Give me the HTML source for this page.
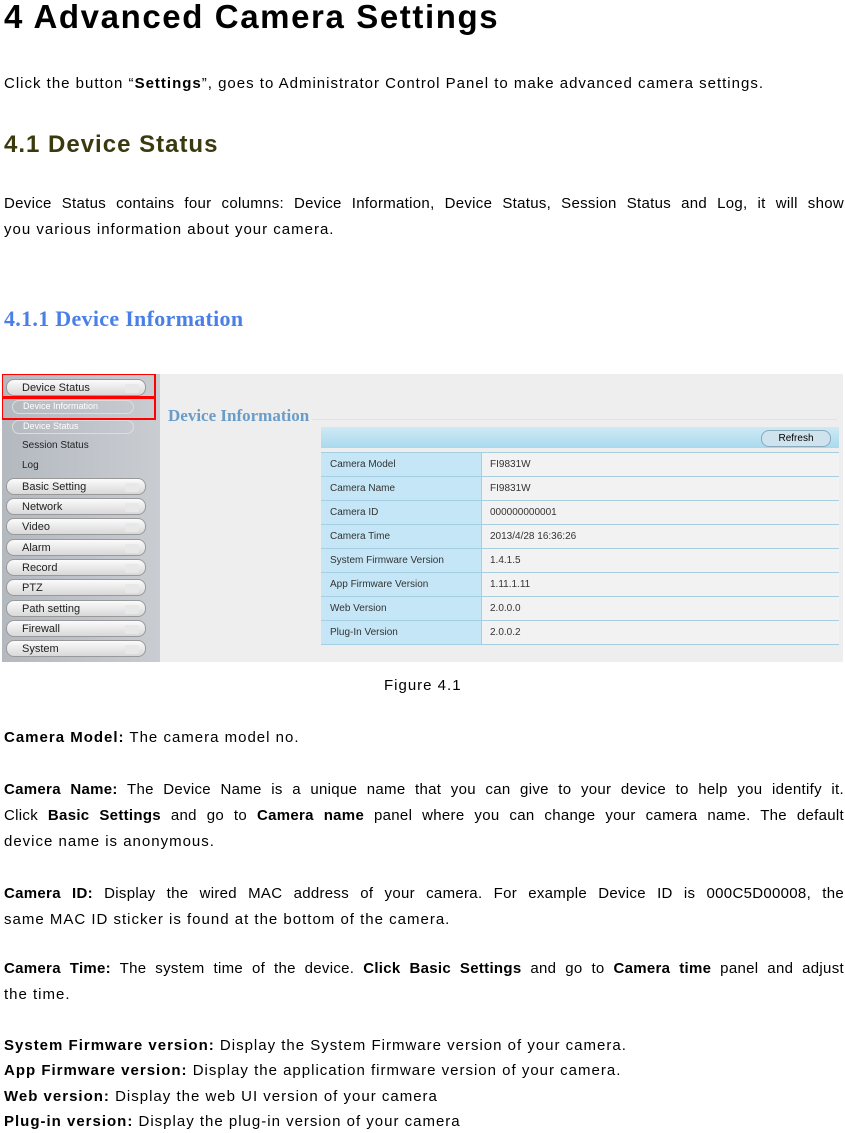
<!DOCTYPE html>
<html><head><meta charset="utf-8"><style>
body{margin:0;width:845px;height:1133px;background:#fff;position:relative;font-family:"Liberation Sans",sans-serif;color:#000;overflow:hidden}
.l{position:absolute;left:4px;font-size:15px;white-space:nowrap;line-height:18px;letter-spacing:1px}
.j{width:840px;text-align:justify;text-align-last:justify;letter-spacing:0.3px}
b{font-weight:bold}
#fig{position:absolute;left:2px;top:374px;width:841px;height:288px;background:#eeeeee;overflow:hidden}
#side{position:absolute;left:0;top:0;width:158px;height:288px;background:linear-gradient(90deg,#b4b9c0,#c9cdd2)}
.btn{position:absolute;left:4px;width:140px;height:17px;border-radius:8px;background:linear-gradient(#fbfbfb,#d8d8d8);border:1px solid #999;font-size:11px;line-height:17px;padding-left:15px;box-sizing:border-box;color:#222}
.btn:after{content:"";position:absolute;right:6px;top:4px;width:14px;height:9px;background:#e8e8e8;border-radius:2px}
.sub{position:absolute;left:20px;font-size:10px;color:#222}
.red{position:absolute;border:2px solid #f00}
#tbl{position:absolute;left:319px;top:53px;width:518px}
.hd{height:21px;background:linear-gradient(#cfe9f5,#a9d9ee);position:relative}
.rf{position:absolute;right:8px;top:3px;width:68px;height:15px;border-radius:8px;background:#cfe3ef;border:1px solid #8ab;font-size:10px;line-height:15px;text-align:center}
.row{height:23px;border-top:1px solid #a5cfe0;display:flex;font-size:10px;line-height:23px;color:#333}
.row div:first-child{width:161px;background:#c5e6f6;padding-left:9px;box-sizing:border-box;border-right:1px solid #a5cfe0}
.row div:last-child{flex:1;background:#f2f2f2;padding-left:8px}
</style></head><body>
<div class="l" style="top:-2px;font-size:33px;font-weight:bold;line-height:38px;letter-spacing:1.6px">4 Advanced Camera Settings</div>
<div class="l" style="top:75px">Click the button “<b>Settings</b>”, goes to Administrator Control Panel to make advanced camera settings.</div>
<div class="l" style="top:131px;font-size:24px;font-weight:bold;color:#3a3a0e;line-height:28px">4.1 Device Status</div>
<div class="l j" style="top:195px">Device Status contains four columns: Device Information, Device Status, Session Status and Log, it will show</div>
<div class="l" style="top:221px">you various information about your camera.</div>
<div class="l" style="top:306px;font-family:'Liberation Serif',serif;font-size:22px;font-weight:bold;color:#4a7fe8;line-height:26px;letter-spacing:0.3px">4.1.1 Device Information</div>
<div id="fig">
<div id="side">
<div class="btn" style="top:5px">Device Status</div>
<div class="sub" style="top:26px;left:10px;width:122px;height:14px;border:1px solid #ddd;border-radius:7px;color:#fff;padding-left:10px;box-sizing:border-box;font-size:9px">Device Information</div>
<div class="sub" style="top:46px;left:10px;width:122px;height:14px;border:1px solid #ddd;border-radius:7px;color:#fff;padding-left:10px;box-sizing:border-box;font-size:9px">Device Status</div>
<div class="sub" style="top:66px">Session Status</div>
<div class="sub" style="top:86px">Log</div>
<div class="btn" style="top:104px">Basic Setting</div>
<div class="btn" style="top:124px">Network</div>
<div class="btn" style="top:144px">Video</div>
<div class="btn" style="top:165px">Alarm</div>
<div class="btn" style="top:185px">Record</div>
<div class="btn" style="top:205px">PTZ</div>
<div class="btn" style="top:226px">Path setting</div>
<div class="btn" style="top:246px">Firewall</div>
<div class="btn" style="top:266px">System</div>
</div>
<div class="red" style="left:-1px;top:-1px;width:151px;height:22px"></div>
<div class="red" style="left:-1px;top:22px;width:151px;height:20px"></div>
<div style="position:absolute;left:166px;top:32px;font-family:'Liberation Serif',serif;font-weight:bold;font-size:17px;color:#6a9cc8">Device Information</div>
<div style="position:absolute;left:310px;top:45px;width:525px;height:1px;background:#f3dcd0"></div>
<div id="tbl">
<div class="hd"><div class="rf">Refresh</div></div>
<div style="height:4px"></div>
<div class="row"><div>Camera Model</div><div>FI9831W</div></div>
<div class="row"><div>Camera Name</div><div>FI9831W</div></div>
<div class="row"><div>Camera ID</div><div>000000000001</div></div>
<div class="row"><div>Camera Time</div><div>2013/4/28 16:36:26</div></div>
<div class="row"><div>System Firmware Version</div><div>1.4.1.5</div></div>
<div class="row"><div>App Firmware Version</div><div>1.11.1.11</div></div>
<div class="row"><div>Web Version</div><div>2.0.0.0</div></div>
<div class="row" style="border-bottom:1px solid #a5cfe0"><div>Plug-In Version</div><div>2.0.0.2</div></div>
</div>
</div>
<div class="l" style="top:677px;left:384px">Figure 4.1</div>
<div class="l" style="top:729px"><b>Camera Model:</b> The camera model no.</div>
<div class="l j" style="top:781px"><b>Camera Name:</b> The Device Name is a unique name that you can give to your device to help you identify it.</div>
<div class="l j" style="top:807px">Click <b>Basic Settings</b> and go to <b>Camera name</b> panel where you can change your camera name. The default</div>
<div class="l" style="top:833px">device name is anonymous.</div>
<div class="l j" style="top:885px"><b>Camera ID:</b> Display the wired MAC address of your camera. For example Device ID is 000C5D00008, the</div>
<div class="l" style="top:911px">same MAC ID sticker is found at the bottom of the camera.</div>
<div class="l j" style="top:960px"><b>Camera Time:</b> The system time of the device. <b>Click Basic Settings</b> and go to <b>Camera time</b> panel and adjust</div>
<div class="l" style="top:986px">the time.</div>
<div class="l" style="top:1037px"><b>System Firmware version:</b> Display the System Firmware version of your camera.</div>
<div class="l" style="top:1062px"><b>App Firmware version:</b> Display the application firmware version of your camera.</div>
<div class="l" style="top:1088px"><b>Web version:</b> Display the web UI version of your camera</div>
<div class="l" style="top:1113px"><b>Plug-in version:</b> Display the plug-in version of your camera</div>
</body></html>
